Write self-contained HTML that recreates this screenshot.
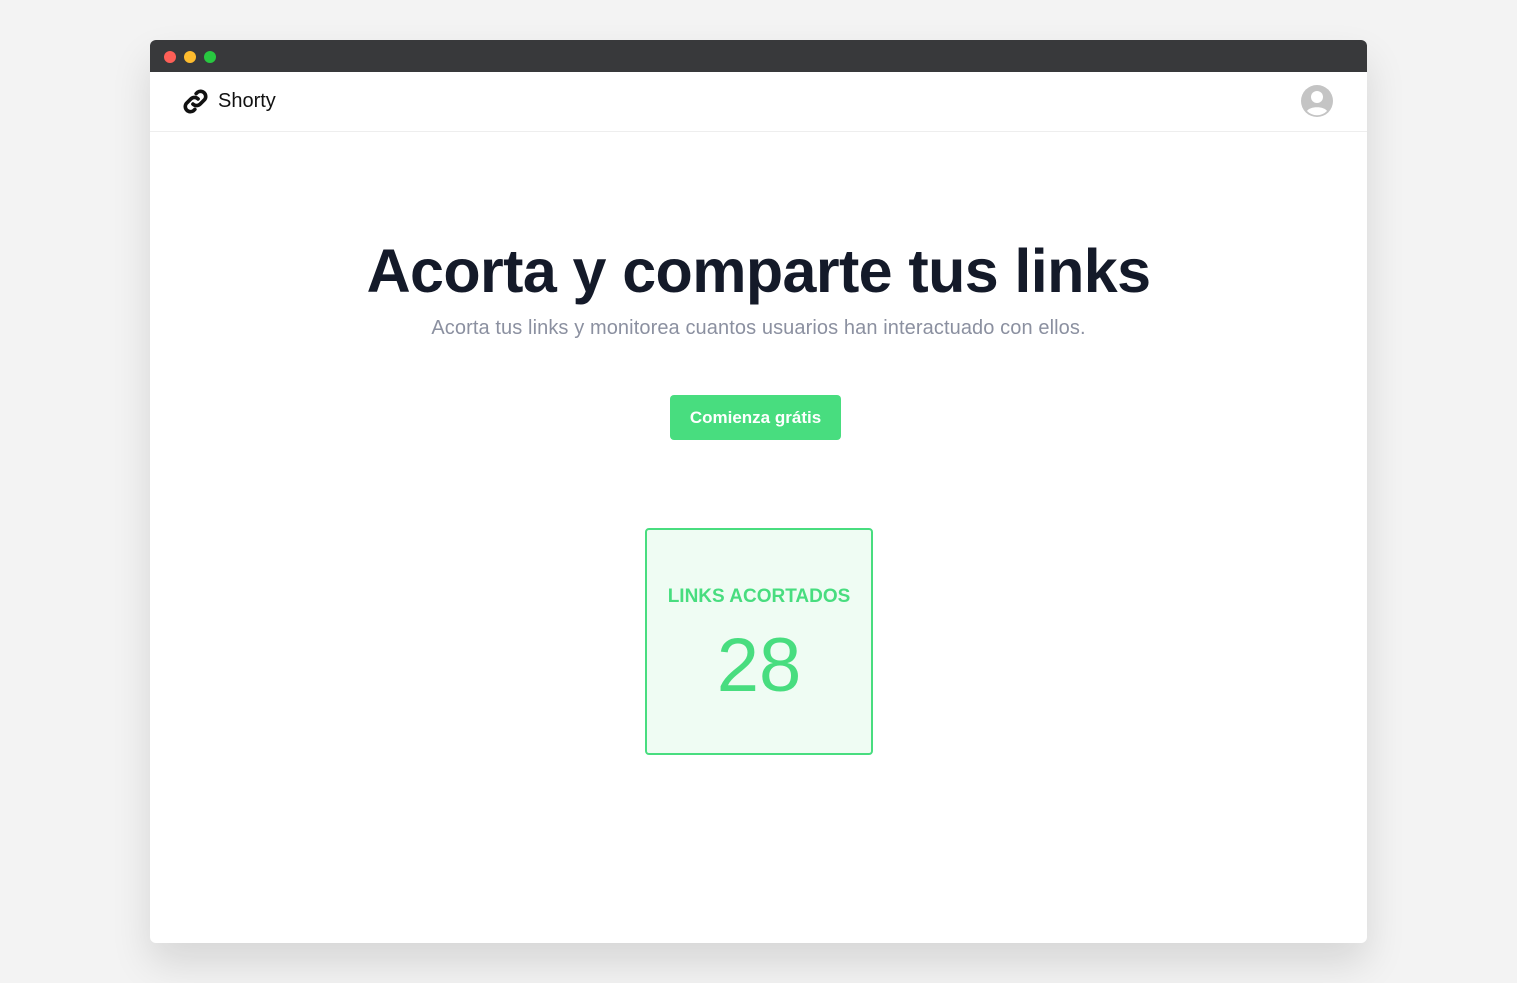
<!DOCTYPE html>
<html><head><meta charset="utf-8"><style>
*{margin:0;padding:0;box-sizing:border-box}
body{width:1517px;height:983px;background:#f3f3f3;font-family:"Liberation Sans",sans-serif;position:relative;overflow:hidden}
.win{position:absolute;left:150px;top:40px;width:1217px;height:903px;background:#fff;border-radius:6px;overflow:hidden;box-shadow:0 20px 40px rgba(0,0,0,.12)}
.bar{height:32px;background:#38393b;position:relative}
.dot{position:absolute;top:11px;width:12px;height:12px;border-radius:50%}
.nav{height:60px;border-bottom:1px solid #eee;position:relative}
.logo{position:absolute;left:30px;top:14px}
.brand{position:absolute;left:68px;top:18px;font-size:20px;color:#111}
h1{position:absolute;left:0;width:1217px;top:196px;text-align:center;font-size:61px;font-weight:700;color:#141a29;letter-spacing:-0.6px}
.sub{position:absolute;left:0;width:1217px;top:277px;text-align:center;font-size:20px;color:#8b90a0;letter-spacing:0.1px}
.btn{position:absolute;left:520px;top:355px;width:171px;height:45px;background:#48dd7f;border-radius:4px;color:#fff;font-size:17px;font-weight:700;text-align:center;line-height:45px}
.card{position:absolute;left:495px;top:488px;width:228px;height:227px;border:2px solid #48dd7f;border-radius:4px;background:#effcf3;text-align:center;color:#48dd7f}
.card .l{margin-top:56px;font-size:19px;font-weight:700}
.card .n{margin-top:20px;font-size:76px;line-height:1}
</style></head><body>
<div class="win">
<div class="bar"><div class="dot" style="left:14px;background:#fe5f57"></div><div class="dot" style="left:34px;background:#febc2e"></div><div class="dot" style="left:54px;background:#28c840"></div></div>
<div class="nav">
<svg class="logo" width="31" height="31" viewBox="0 0 24 24" fill="none" stroke="#111" stroke-width="2.8" stroke-linecap="round"><path d="M10 14a4 4 0 0 0 5.6 0l3.5-3.5a4 4 0 0 0-5.6-5.6l-1 1"/><path d="M14 10a4 4 0 0 0-5.6 0l-3.5 3.5a4 4 0 0 0 5.6 5.6l1-1"/></svg>
<div class="brand">Shorty</div>
<svg style="position:absolute;left:1151px;top:13px" width="32" height="32" viewBox="0 0 32 32"><circle cx="16" cy="16" r="16" fill="#c4c4c4"/><circle cx="16" cy="12" r="6" fill="#fff"/><path d="M6 26c3-5 17-5 20 0a14 14 0 0 1-20 0z" fill="#fff"/></svg>
</div>
<h1>Acorta y comparte tus links</h1>
<div class="sub">Acorta tus links y monitorea cuantos usuarios han interactuado con ellos.</div>
<div class="btn">Comienza grátis</div>
<div class="card"><div class="l">LINKS ACORTADOS</div><div class="n">28</div></div>
</div>
</body></html>
